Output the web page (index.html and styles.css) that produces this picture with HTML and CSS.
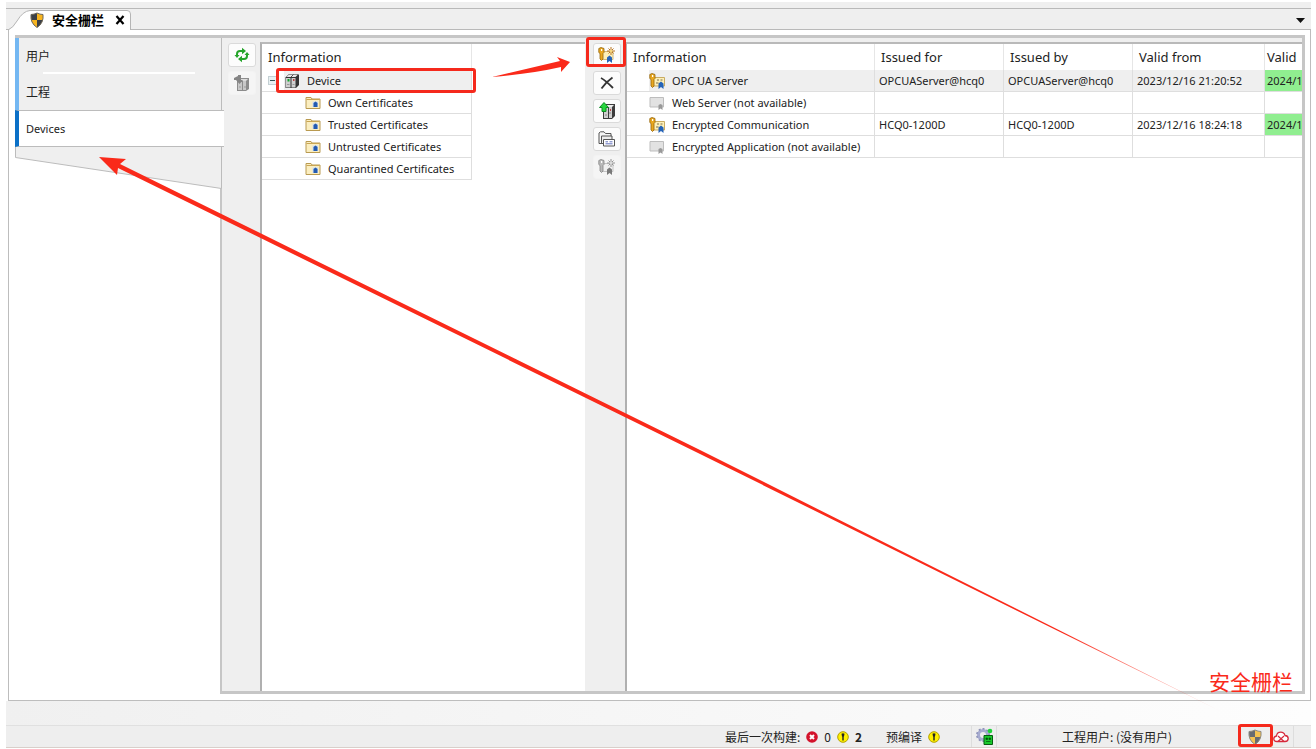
FILE: index.html
```html
<!DOCTYPE html>
<html lang="zh-CN">
<head>
<meta charset="UTF-8">
<meta name="viewport" content="width=device-width, initial-scale=1.0">

<title>安全栅栏</title>
<link rel="stylesheet" href="styles.css">
</head>
<body>
    <!-- shared icons -->
    <svg class="icon-defs" width="0" height="0" aria-hidden="true">
        <symbol id="shield" viewBox="0 0 14 16">
            <path d="M7 1 Q10 2.500 13 2.500 Q14 11 7 15.500 Q0 11 1 2.500 Q4 2.500 7 1Z" fill="#f7b41e"/>
            <path d="M7 1 Q4 2.500 1 2.500 Q.8 5.500 1.500 8 H7Z M7 8 H12.500 Q11.500 12.500 7 15.500Z" fill="#3b4048"/>
            <path d="M7 1 Q10 2.500 13 2.500 Q14 11 7 15.500 Q0 11 1 2.500 Q4 2.500 7 1Z" fill="none" stroke="#6b665c" stroke-width="1"/>
        </symbol>
        <symbol id="server" viewBox="0 0 16 16">
            <path d="M1.500 4.500 L5 1 H14 L15 2 V12 L12 15 H1.500Z" fill="#333"/>
            <path d="M2 5 H6.500 V14.500 H2Z M7.500 5 H11.500 V14.500 H7.500Z" fill="#cfcfcf"/>
            <path d="M2.500 4 L5 1.500 H14 L11.500 4Z" fill="#e8e8e8"/>
            <path d="M7 4L9.500 1.500" stroke="#555"/>
            <path d="M3 11.500H5.500M8.500 11.500H10.500" stroke="#999"/>
            <path d="M3.500 6H5.500V8.500H3.500Z" fill="#12a52c"/>
            <path d="M9 6H10.500V8H9Z" fill="#b44"/>
        </symbol>
        <symbol id="folder" viewBox="0 0 16 14">
            <path d="M1 12.500 V1.500 H6 L7 3 H15 V12.500Z" fill="#fbeec0" stroke="#b99a50"/>
            <path d="M1.500 3.500H14.500" stroke="#caa653"/>
            <path d="M7.500 5.500H13V11H7.500Z" fill="#cfdef2"/>
            <path d="M8.500 7 L10.500 5.500 L12.500 7 V11 H8.500Z" fill="#245bb0"/>
        </symbol>
        <symbol id="cert-key" viewBox="0 0 16 16">
            <path d="M3 4.500H15.500V13H3Z" fill="#fdf0b8" stroke="#c9ab62"/>
            <path d="M8 7H10M11.500 7H13.500M7 10H9.500" stroke="#7d6f4c"/>
            <path d="M.8 1.500 L3 .5 L6 1.500 V5.500 L5 6.500 V13 L3.500 14.500 L2 13 V6.500 L.8 5.500Z" fill="#e9a820" stroke="#94650d" stroke-width=".8"/>
            <path d="M3 2H4.200V4H3Z" fill="#fff"/>
            <path d="M9.500 10.500 L12 8.500 L14.500 10.500 V16 L12 14 L9.500 16Z" fill="#2463b8"/>
        </symbol>
        <symbol id="cert-new" viewBox="0 0 18 16">
            <path d="M3 4.500H15V12.500H3Z" fill="#fdf0b8" stroke="#d1b87a"/>
            <path d="M.8 1.500 L3 .5 L6 1.500 V5.500 L5 6.500 V12 L3.500 13.500 L2 12 V6.500 L.8 5.500Z" fill="#e9a820" stroke="#94650d" stroke-width=".8"/>
            <path d="M3 2H4.200V4H3Z" fill="#fff"/>
            <path d="M13 0V8M9 4H17M10.500 1.500 L15.500 6.500M15.500 1.500 L10.500 6.500" stroke="#b87421" stroke-width="1"/>
            <path d="M13 2.500L14.500 4L13 5.500L11.500 4Z" fill="#ffe58a"/>
            <path d="M9 10.500 L11.500 8.500 L14 10.500 V16 L11.500 14 L9 16Z" fill="#2463b8"/>
        </symbol>
        <symbol id="cert-none" viewBox="0 0 16 16">
            <path d="M1 2.500H14.500V12H1Z" fill="#e2e2e2" stroke="#bdbdbd"/>
            <path d="M9.500 10 L11.500 9 L13.500 10 V15 L11.500 13.500 L9.500 15Z" fill="#999"/>
        </symbol>
        <symbol id="warn" viewBox="0 0 12 12">
            <circle cx="6" cy="6" r="5.300" fill="#fff000" stroke="#b3a100"/>
            <path d="M4.500 2.800 Q6 1.800 7.500 2.800 L7 5.500 H5Z M5.300 5H6.700V9.500H5.300Z" fill="#222"/>
        </symbol>
    </svg>

    <div class="app">
        <div class="tab-strip">
            <div class="tab">
                <svg class="tab-shape" viewBox="0 0 123 20" preserveAspectRatio="none" aria-hidden="true">
                    <path d="M0 20 Q5 18 9 11 Q15 1 22 .5 H119 Q122.500 .5 122.500 4 V20" fill="#fff" stroke="#b5b5b5"/>
                </svg>
                <svg class="tab-icon" aria-hidden="true"><use href="#shield"/></svg>
                <span class="tab-title">安全栅栏</span>
                <button class="tab-close" type="button" aria-label="关闭">
                    <svg viewBox="0 0 10 10" width="10" height="10"><path d="M1.500 1L8.500 9M8.500 1L1.500 9" stroke="#000" stroke-width="2.200"/></svg>
                </button>
            </div>
            <button class="tab-menu" type="button" aria-label="窗口列表">
                <svg viewBox="0 0 9 5" width="9" height="5"><path d="M0 0H9L4.500 5Z" fill="#111"/></svg>
            </button>
        </div>

        <main class="workspace">
            <nav class="sidebar">
                <button type="button" class="nav-item">用户</button>
                <button type="button" class="nav-item">工程</button>
                <button type="button" class="nav-item active">Devices</button>
                <svg class="nav-tail" viewBox="0 0 207 42" preserveAspectRatio="none" aria-hidden="true">
                    <path d="M.5 0V10.500L206.500 41.500V0Z" fill="#efefef"/>
                    <path d="M.5 0V10.500L206.500 41.500V0" fill="none" stroke="#bcbcbc"/>
                </svg>
            </nav>

            <div class="devices">
                <div class="toolbar left-tools">
                    <button type="button" class="tool" aria-label="刷新">
                        <svg viewBox="0 0 16 16" width="16" height="16">
                            <path d="M3 9V7Q3 4 6 4H9M13 7V9Q13 12 10 12H7" fill="none" stroke="#26a52b" stroke-width="2"/>
                            <path d="M8 .8L12 4L8 7.200ZM8 8.800L4 12L8 15.200Z" fill="#26a52b"/>
                            <path d="M.5 8H5.500L3 11ZM10.500 8L13 5L15.500 8Z" fill="#26a52b"/>
                        </svg>
                    </button>
                    <button type="button" class="tool" disabled aria-label="下载">
                        <svg viewBox="0 0 16 17" width="16" height="17">
                            <path d="M3 6L6 3H15V14L12 16H3Z" fill="#8c8c8c"/>
                            <path d="M4 7H8V15H4ZM9 6H12V15H9Z" fill="#c8c8c8"/>
                            <path d="M6 4H14L12 6H5Z" fill="#dcdcdc"/>
                            <path d="M5 12H7M10 12H12" stroke="#9b9b9b"/>
                            <path d="M0 3L4 1V0H7V5H9L5.500 9L2 5H0Z" fill="#858585"/>
                        </svg>
                    </button>
                </div>

                <section class="tree">
                    <table class="grid tree-grid">
                        <thead>
                            <tr><th>Information</th></tr>
                        </thead>
                        <tbody>
                            <tr>
                                <td>
                                    <div class="node root">
                                        <button type="button" class="expander" aria-label="折叠"></button>
                                        <div class="root-label">
                                            <svg class="icon" aria-hidden="true"><use href="#server"/></svg>
                                            <span>Device</span>
                                            <i class="mark mark-device"></i>
                                        </div>
                                    </div>
                                </td>
                            </tr>
                            <tr><td><div class="node child"><svg class="icon" aria-hidden="true"><use href="#folder"/></svg>Own Certificates</div></td></tr>
                            <tr><td><div class="node child"><svg class="icon" aria-hidden="true"><use href="#folder"/></svg>Trusted Certificates</div></td></tr>
                            <tr><td><div class="node child"><svg class="icon" aria-hidden="true"><use href="#folder"/></svg>Untrusted Certificates</div></td></tr>
                            <tr><td><div class="node child"><svg class="icon" aria-hidden="true"><use href="#folder"/></svg>Quarantined Certificates</div></td></tr>
                        </tbody>
                    </table>
                </section>

                <div class="toolbar right-tools">
                    <button type="button" class="tool" aria-label="创建证书">
                        <svg viewBox="0 0 18 16" width="18" height="16"><use href="#cert-new"/></svg>
                        <i class="mark mark-tool"></i>
                    </button>
                    <button type="button" class="tool" aria-label="删除">
                        <svg viewBox="0 0 14 14" width="14" height="14"><path d="M1 2Q5 4 13 12M12.500 1.500Q6 6 1.500 12.500" fill="none" stroke="#333" stroke-width="1.800"/></svg>
                    </button>
                    <button type="button" class="tool" aria-label="上传">
                        <svg viewBox="0 0 17 18" width="17" height="18">
                            <path d="M4 5L7 2H16V14L13 17H4Z" fill="#3d3d3d"/>
                            <path d="M5 6H9V16H5ZM10 5H13V16H10Z" fill="#cfcfcf"/>
                            <path d="M6 3H15L13 5H6Z" fill="#eee"/>
                            <path d="M6 13H8M10 11H12" stroke="#888"/>
                            <path d="M11 7H12V9H11Z" fill="#b44"/>
                            <path d="M5 .5L9.500 5.500H7V9.500H3V5.500H.5Z" fill="#27d63d" stroke="#0c8d22"/>
                        </svg>
                    </button>
                    <button type="button" class="tool" aria-label="证书详情">
                        <svg viewBox="0 0 18 16" width="18" height="16">
                            <path d="M1 12.500V2L2.500 .8H6L7.500 2.500H13V5" fill="#f5f5f5" stroke="#555"/>
                            <path d="M1 12.500L3.500 12.500V5H14V8.500" fill="#ececec" stroke="#555"/>
                            <path d="M1 12.500H6" stroke="#555"/>
                            <path d="M5.500 8.500H16.500V15H5.500Z" fill="#fff" stroke="#555"/>
                            <path d="M7.500 10.800H10M11.500 10.800H14.500M7.500 12.800H14.500" stroke="#6170bd"/>
                        </svg>
                    </button>
                    <button type="button" class="tool" disabled aria-label="续订证书">
                        <svg class="faded" viewBox="0 0 18 16" width="18" height="16"><use href="#cert-new"/></svg>
                    </button>
                </div>

                <section class="details">
                    <table class="grid cert-grid">
                        <colgroup>
                            <col class="col-info">
                            <col class="col-name">
                            <col class="col-name">
                            <col class="col-date">
                            <col>
                        </colgroup>
                        <thead>
                            <tr>
                                <th>Information</th>
                                <th>Issued for</th>
                                <th>Issued by</th>
                                <th>Valid from</th>
                                <th>Valid</th>
                            </tr>
                        </thead>
                        <tbody>
                            <tr class="selected">
                                <td><div class="node"><svg class="icon" aria-hidden="true"><use href="#cert-key"/></svg>OPC UA Server</div></td>
                                <td>OPCUAServer@hcq0</td>
                                <td>OPCUAServer@hcq0</td>
                                <td>2023/12/16 21:20:52</td>
                                <td class="valid">2024/1</td>
                            </tr>
                            <tr>
                                <td><div class="node"><svg class="icon" aria-hidden="true"><use href="#cert-none"/></svg>Web Server (not available)</div></td>
                                <td></td>
                                <td></td>
                                <td></td>
                                <td></td>
                            </tr>
                            <tr>
                                <td><div class="node"><svg class="icon" aria-hidden="true"><use href="#cert-key"/></svg>Encrypted Communication</div></td>
                                <td>HCQ0-1200D</td>
                                <td>HCQ0-1200D</td>
                                <td>2023/12/16 18:24:18</td>
                                <td class="valid">2024/1</td>
                            </tr>
                            <tr>
                                <td><div class="node"><svg class="icon" aria-hidden="true"><use href="#cert-none"/></svg>Encrypted Application (not available)</div></td>
                                <td></td>
                                <td></td>
                                <td></td>
                                <td></td>
                            </tr>
                        </tbody>
                    </table>
                </section>
            </div>
        </main>

        <div class="dock"></div>

        <footer class="statusbar">
            <div class="status build">
                <span>最后一次构建:</span>
                <svg viewBox="0 0 12 12" width="12" height="12" aria-hidden="true">
                    <circle cx="6" cy="6" r="5.800" fill="#d3122b"/>
                    <path d="M4 4L8 8M8 4L4 8" stroke="#fff" stroke-width="2"/>
                </svg>
                <span>0</span>
                <svg width="12" height="12" aria-hidden="true"><use href="#warn"/></svg>
                <b>2</b>
            </div>
            <div class="status precompile">
                <span>预编译</span>
                <svg width="12" height="12" aria-hidden="true"><use href="#warn"/></svg>
            </div>
            <div class="status online">
                <svg viewBox="0 0 18 18" width="18" height="18" aria-hidden="true">
                    <circle cx="7" cy="7" r="4.500" fill="none" stroke="#a6abd0" stroke-width="3"/>
                    <circle cx="7" cy="7" r="6.200" fill="none" stroke="#8b90b8" stroke-width="1.500" stroke-dasharray="2 2"/>
                    <circle cx="14" cy="3" r="2.300" fill="#1fd33a"/>
                    <path d="M8 7.500H16.500V16.500H8Z" fill="#18c92c" stroke="#075c10"/>
                    <path d="M10 10H11.500V11.500H10ZM13 10H14.500V11.500H13ZM10 13.500H14.500" fill="#064d0d" stroke="#064d0d" stroke-width=".7"/>
                </svg>
            </div>
            <div class="status user">工程用户: (没有用户)</div>
            <div class="status security">
                <svg class="tab-icon muted" aria-hidden="true"><use href="#shield"/></svg>
                <i class="mark mark-shield"></i>
            </div>
            <div class="status cloud">
                <svg viewBox="0 0 16 12" width="16" height="12" aria-hidden="true">
                    <path d="M4 10.500Q.8 10.500 .8 7.800Q.8 5.500 3.500 5Q4 1.200 7.800 1.200Q11 1.200 12 4.500Q15.200 4.800 15.200 7.500Q15.200 10.500 12 10.500Z" fill="#fff" stroke="#d6283b" stroke-width="1.300"/>
                    <path d="M5 5L11 10.500M11 5L5 10.500" stroke="#d6283b" stroke-width="1.200"/>
                </svg>
            </div>
        </footer>

        <!-- annotations -->
        <svg class="arrows" viewBox="0 0 1316 749" preserveAspectRatio="none" aria-hidden="true">
            <defs>
                <linearGradient id="fade" gradientUnits="userSpaceOnUse" x1="1060" y1="633" x2="1220" y2="712">
                    <stop offset="0" stop-color="#fa2a1a"/>
                    <stop offset="1" stop-color="#fa2a1a" stop-opacity=".15"/>
                </linearGradient>
            </defs>
            <path d="M99 157L126 159L120 164L700 450L1220 711L698 453L118 168L117 175Z" fill="url(#fade)"/>
            <path d="M492 77L560 61L557 57L570 62L561 72L561 67Q530 74 492 77Z" fill="#fa2a1a"/>
        </svg>
        <span class="note">安全栅栏</span>
    </div>
</body>
</html>
```
FILE: styles.css
```css
* {
    box-sizing: border-box;
}

body {
    margin: 0;
    background-color: #fff;
    color: #222;
    font-family: "Noto Sans", "Noto Sans CJK SC", sans-serif;
    font-size: 11px;
}

button {
    margin: 0;
    padding: 0;
    border: none;
    background: none;
    color: inherit;
    font: inherit;
    cursor: pointer;
}

svg {
    display: block;
    flex: none;
}

.icon-defs {
    position: absolute;
}

.app {
    position: relative;
    display: flex;
    flex-direction: column;
    height: 100vh;
    padding: 2px 5px 1px 6px;
}

/* document tabs */
.tab-strip {
    display: flex;
    justify-content: space-between;
    align-items: flex-end;
    height: 28px;
    padding: 0 6px 0 2px;
    border-bottom: 1px solid #b9b9b9;
    background: linear-gradient(#efefef 6px, #b9b9b9 6px, #b9b9b9 7px, #efefef 7px);
}

.tab {
    position: relative;
    display: flex;
    align-items: center;
    width: 123px;
    height: 20px;
    margin-bottom: -1px;
    padding-left: 22px;
}

.tab-shape {
    position: absolute;
    top: 0;
    left: 0;
    width: 100%;
    height: 100%;
}

.tab-icon {
    position: relative;
    width: 14px;
    height: 16px;
}

.tab-title {
    position: relative;
    margin-left: 8px;
    color: #000;
    font-size: 13px;
    line-height: 20px;
    font-weight: bold;
}

.tab-close {
    position: relative;
    margin-left: 11px;
}

.tab-menu {
    padding: 6px 0;
}

/* main area */
.workspace {
    display: flex;
    flex: 1;
    min-height: 0;
    margin-left: 2px;
    padding: 5px 5px 6px 6px;
    border: 1px solid #bdbdbd;
    border-top: none;
}

.sidebar {
    display: flex;
    flex-direction: column;
    width: 207px;
    border-top: 3px solid #c6c6c6;
    z-index: 1;
}

.nav-item {
    height: 36px;
    padding-left: 7px;
    border-left: 4px solid #73b7f2;
    border-right: 1px solid #bcbcbc;
    background-color: #efefef;
    font-size: 12px;
    text-align: left;
}

.nav-item:first-child {
    background: linear-gradient(#fff, #fff) 24px 100% / 152px 2px no-repeat #efefef;
}

.nav-item.active {
    height: 37px;
    margin-right: -2px;
    border-top: 1px solid #bcbcbc;
    border-bottom: 1px solid #bcbcbc;
    border-left-color: #0b70c7;
    border-right: none;
    background-color: #fff;
    font-size: 11px;
}

.nav-tail {
    width: 207px;
    height: 42px;
}

.devices {
    display: flex;
    flex: 1;
    min-width: 0;
    margin-left: -2px;
    border: 3px solid #c6c6c6;
    border-left-width: 2px;
    background-color: #efefef;
}

/* tool columns */
.toolbar {
    display: flex;
    flex-direction: column;
    align-items: center;
    gap: 4px;
    padding-top: 5px;
}

.left-tools {
    width: 38px;
    padding-left: 2px;
}

.right-tools {
    width: 40px;
    padding-left: 4px;
}

.tool {
    position: relative;
    display: flex;
    justify-content: center;
    align-items: center;
    width: 28px;
    height: 24px;
    border: 1px solid #dadada;
    border-radius: 3px;
    background-color: #fcfcfc;
}

.tool:disabled {
    border-color: #f3f3f3;
    background-color: #f5f5f5;
    cursor: default;
}

.faded {
    filter: grayscale(1);
    opacity: .8;
}

/* tables */
.tree,
.details {
    min-width: 0;
    margin-top: 4px;
    border-top: 2px solid #b9b9b9;
    border-left: 2px solid #b0b0b0;
    background-color: #fff;
    overflow: hidden;
}

.tree {
    width: 325px;
}

.details {
    flex: 1;
}

.grid {
    border-collapse: separate;
    border-spacing: 0;
    table-layout: fixed;
}

.grid th {
    height: 26px;
    padding: 0 0 0 6px;
    border-right: 1px solid #e6e6e6;
    font-size: 13px;
    font-weight: normal;
    text-align: left;
}

.grid td {
    height: 22px;
    padding: 0 0 0 4px;
    border-right: 1px solid #dedede;
    border-bottom: 1px solid #dedede;
    white-space: nowrap;
}

.tree-grid {
    width: 210px;
}

.tree-grid td {
    padding: 0;
}

.node {
    display: flex;
    align-items: center;
    gap: 7px;
    height: 21px;
}

.icon {
    width: 16px;
    height: 16px;
}

.node.root {
    padding-left: 6px;
}

.node.child {
    padding-left: 43px;
}

.root-label {
    position: relative;
    display: flex;
    flex: 1;
    align-items: center;
    gap: 7px;
    height: 21px;
    background-color: #efefef;
}

.expander {
    width: 9px;
    height: 9px;
    border: 1px solid #c4d0d4;
    background: linear-gradient(#355, #355) center / 5px 1px no-repeat #e8f0f1;
}

.cert-grid {
    width: 100%;
}

.col-info {
    width: 248px;
}

.col-name {
    width: 129px;
}

.col-date {
    width: 132px;
}

.cert-grid td:first-child {
    padding-left: 22px;
}

.cert-grid th:last-child,
.cert-grid td:last-child {
    padding-left: 2px;
    border-right: none;
}

.selected td,
.selected .node {
    background-color: #efefef;
}

.selected td:first-child {
    background-color: #fff;
}

.grid .valid {
    background-color: #90ee90;
}

/* bottom */
.dock {
    height: 25px;
    border-bottom: 1px solid #e0e0e0;
    background: linear-gradient(90deg, #f0f0f0, #fdfdfd);
}

.statusbar {
    display: flex;
    justify-content: flex-end;
    height: 22px;
    padding-right: 17px;
    border-bottom: 1px solid #d9cfca;
    background-color: #eee;
    font-family: "Noto Sans CJK SC", sans-serif;
    font-size: 12px;
}

.status {
    display: flex;
    align-items: center;
    gap: 6px;
}

.precompile {
    margin-left: 24px;
}

.online {
    margin-left: 31px;
    padding: 0 2px 0 4px;
    border-left: 1px solid #ddd;
    border-right: 1px solid #ddd;
}

.user {
    width: 120px;
    margin-left: 65px;
}

.security {
    position: relative;
    margin-left: 66px;
}

.muted {
    opacity: .75;
}

.cloud {
    margin-left: 11px;
    padding-right: 4px;
    border-right: 1px solid #ddd;
}

/* red annotations */
.mark {
    position: absolute;
    border: 3px solid #f5291c;
    border-radius: 3px;
    pointer-events: none;
}

.mark-device {
    inset: -2px -5px -2px -8px;
    z-index: 1;
}

.mark-tool {
    inset: -7px -6px -1px -8px;
    z-index: 1;
}

.mark-shield {
    inset: -2px -11px 0 -10px;
}

.arrows {
    position: absolute;
    inset: 0;
    width: 100%;
    height: 100%;
    z-index: 2;
    pointer-events: none;
}

.note {
    position: absolute;
    right: 23px;
    bottom: 52px;
    z-index: 2;
    color: #fa2a1a;
    font-family: "Noto Sans CJK SC", sans-serif;
    font-size: 21px;
    line-height: 32px;
}
```
